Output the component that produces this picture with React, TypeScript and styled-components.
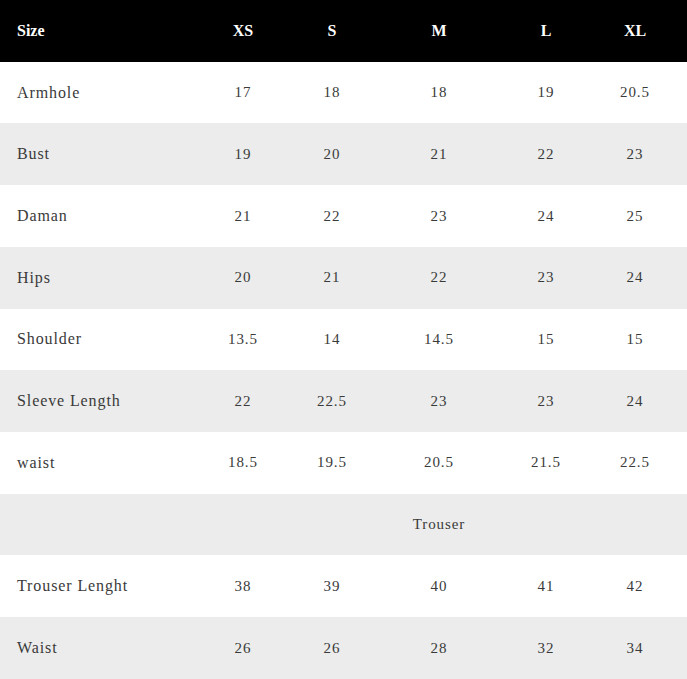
import React from "react";
import styled, { createGlobalStyle } from "styled-components";

const Global = createGlobalStyle`
  html, body { margin: 0; padding: 0; background: #ffffff; }
  body { font-family: "Liberation Serif", "DejaVu Serif", serif; }
`;

const Table = styled.div`
  width: 687px;
  display: flex;
  flex-direction: column;
`;

const Row = styled.div<{ $variant: "head" | "white" | "gray" }>`
  display: grid;
  grid-template-columns: 191px 104px 74px 140px 74px 104px;
  height: 61.73px;
  align-items: center;
  background: ${(p) =>
    p.$variant === "head" ? "#000000" : p.$variant === "gray" ? "#ebeceb" : "#ffffff"};
  color: ${(p) => (p.$variant === "head" ? "#ffffff" : "#3a3a3a")};
`;

const Label = styled.div<{ $head?: boolean }>`
  padding-left: 17px;
  font-size: 16px;
  font-weight: ${(p) => (p.$head ? 700 : 400)};
  letter-spacing: ${(p) => (p.$head ? "0" : "0.9px")};
  white-space: nowrap;
`;

const Cell = styled.div<{ $head?: boolean }>`
  text-align: center;
  font-size: ${(p) => (p.$head ? "16px" : "15px")};
  font-weight: ${(p) => (p.$head ? 700 : 400)};
  letter-spacing: ${(p) => (p.$head ? "0" : "0.9px")};
  white-space: nowrap;
`;

const sizes = ["XS", "S", "M", "L", "XL"];

const rows: { label: string; values: string[] }[] = [
  { label: "Armhole", values: ["17", "18", "18", "19", "20.5"] },
  { label: "Bust", values: ["19", "20", "21", "22", "23"] },
  { label: "Daman", values: ["21", "22", "23", "24", "25"] },
  { label: "Hips", values: ["20", "21", "22", "23", "24"] },
  { label: "Shoulder", values: ["13.5", "14", "14.5", "15", "15"] },
  { label: "Sleeve Length", values: ["22", "22.5", "23", "23", "24"] },
  { label: "waist", values: ["18.5", "19.5", "20.5", "21.5", "22.5"] },
  { label: "", values: ["", "", "Trouser", "", ""] },
  { label: "Trouser Lenght", values: ["38", "39", "40", "41", "42"] },
  { label: "Waist", values: ["26", "26", "28", "32", "34"] },
];

export default function App() {
  return (
    <>
      <Global />
      <Table>
        <Row $variant="head">
          <Label $head>Size</Label>
          {sizes.map((s) => (
            <Cell key={s} $head>
              {s}
            </Cell>
          ))}
        </Row>
        {rows.map((r, i) => (
          <Row key={i} $variant={i % 2 === 0 ? "white" : "gray"}>
            <Label>{r.label}</Label>
            {r.values.map((v, j) => (
              <Cell key={j}>{v}</Cell>
            ))}
          </Row>
        ))}
      </Table>
    </>
  );
}
